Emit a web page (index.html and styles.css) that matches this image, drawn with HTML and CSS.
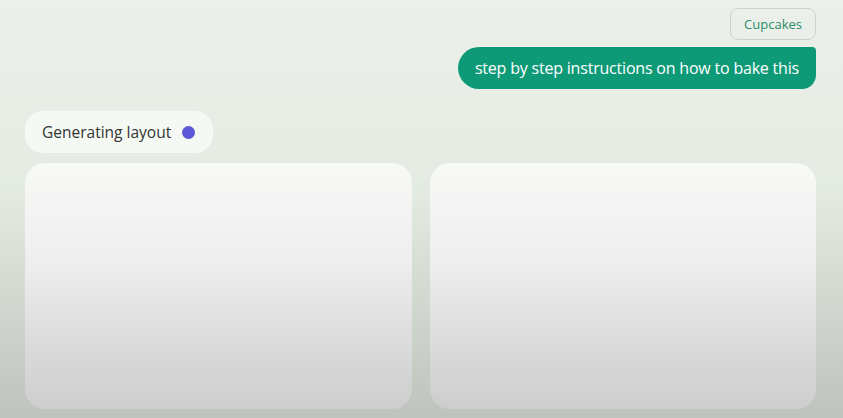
FILE: index.html
```html
<!DOCTYPE html>
<html lang="en">
<head>
  <meta charset="UTF-8" />
  <meta name="viewport" content="width=device-width, initial-scale=1" />
  <title>Generating layout</title>
  <link rel="stylesheet" href="styles.css">
</head>
<body>

  <div class="chat">
    <div class="chip">Cupcakes</div>
    <div class="bubble">step by step instructions on how to bake this</div>

    <div class="status">
      <span>Generating layout</span>
      <span class="dot"></span>
    </div>

    <div class="cards">
      <div class="card"></div>
      <div class="card"></div>
    </div>
  </div>

</body>
</html>
```

FILE: styles.css
```css
* {
  box-sizing: border-box;
  margin: 0;
  padding: 0;
}

html, body {
  height: 100%;
}

body {
  font-family: 'Open Sans', Roboto, sans-serif;
  background: linear-gradient(to bottom, #ebf1ea 0%, #e4ebe2 45%, #bec4bd 100%);
  overflow: hidden;
}

.chat {
  display: flex;
  flex-direction: column;
  align-items: flex-end;
  padding: 8px 27px 0 25px;
}

.chip {
  height: 32px;
  padding: 0 13px;
  display: flex;
  align-items: center;
  border: 1.5px solid #c8d6cb;
  border-radius: 8px;
  color: #2d8c69;
  font-size: 13px;
}

.bubble {
  margin-top: 7px;
  height: 42px;
  padding: 0 17px;
  display: flex;
  align-items: center;
  background: #0e9a77;
  color: #fff;
  font-size: 16px;
  font-weight: 500;
  letter-spacing: -0.2px;
  border-radius: 21px 4px 14px 21px;
}

.status {
  align-self: flex-start;
  margin-top: 22px;
  height: 42px;
  padding: 0 18px 0 17px;
  display: flex;
  align-items: center;
  gap: 11px;
  background: #f5f9f3;
  border-radius: 18px;
  color: #333;
  font-size: 15.5px;
}

.dot {
  width: 13px;
  height: 13px;
  border-radius: 50%;
  background: #5d56d8;
}

.cards {
  align-self: stretch;
  margin-top: 10px;
  display: grid;
  grid-template-columns: 1fr 1fr;
  gap: 18px;
}

.card {
  height: 246px;
  border-radius: 20px;
  background: linear-gradient(to bottom, #f8faf7 0%, #eeeeee 40%, #cdcdcd 100%);
}
```
